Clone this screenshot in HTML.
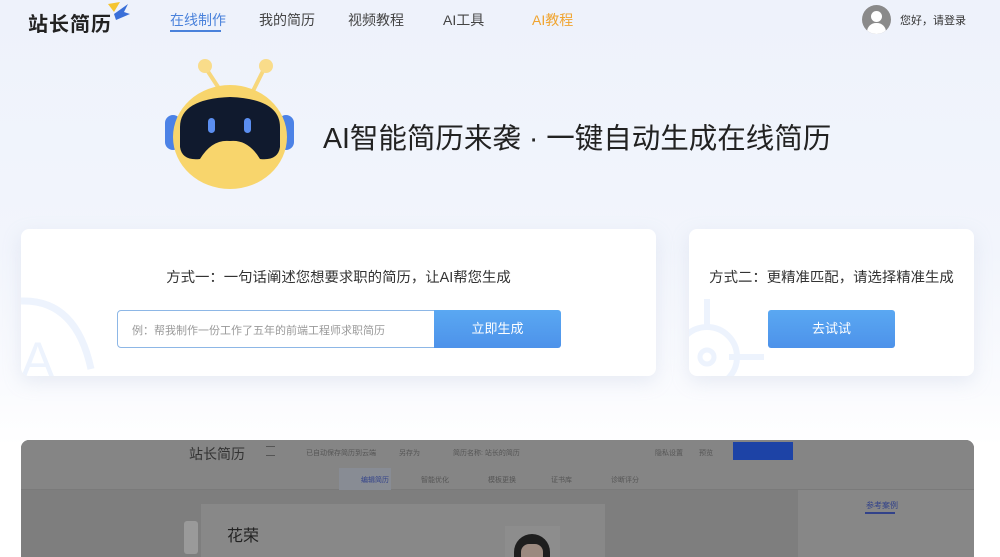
<!DOCTYPE html>
<html><head><meta charset="utf-8"><style>
*{margin:0;padding:0;box-sizing:border-box}
body{width:1000px;height:557px;overflow:hidden;font-family:"Liberation Sans","Noto Sans CJK SC",sans-serif;background:linear-gradient(180deg,#eef2fb 0%,#f2f5fc 45%,#fafbfe 70%,#fff 80%);position:relative;color:#333}
.abs{position:absolute}
.nav a{position:absolute;top:10px;font-size:14px;color:#444;text-decoration:none}
.card{position:absolute;background:#fff;border-radius:8px;box-shadow:0 6px 18px rgba(180,190,215,.25);overflow:hidden}
.btn{position:absolute;background:linear-gradient(180deg,#5aa8f2,#4d92ea);color:#fff;font-size:13px;text-align:center;border-radius:3px}
.s{position:absolute;font-size:7px;color:#555}
</style></head><body>
<div class="abs" style="left:28px;top:8px;font-size:20px;font-weight:bold;color:#222;letter-spacing:1px">站长简历</div>
<svg class="abs" style="left:104px;top:0" width="28" height="22"><polygon points="4,4 16,2 10,12" fill="#f5c531"/><polygon points="10,14 24,4 20,12 26,14 12,20" fill="#3a6fd8"/></svg>
<div class="nav">
<a style="left:170px;color:#4a82db">在线制作</a>
<div class="abs" style="left:170px;top:30px;width:51px;height:2px;background:#4a82db"></div>
<a style="left:259px">我的简历</a>
<a style="left:348px">视频教程</a>
<a style="left:443px">AI工具</a>
<a style="left:532px;color:#f0a42f">AI教程</a>
</div>
<div class="abs" style="left:862px;top:5px;width:29px;height:29px;border-radius:50%;background:#8a8a8a;overflow:hidden"><div class="abs" style="left:9px;top:6px;width:11px;height:11px;border-radius:50%;background:#fff"></div><div class="abs" style="left:5px;top:18px;width:19px;height:14px;border-radius:9px 9px 0 0;background:#fff"></div></div>
<div class="abs" style="left:900px;top:12px;font-size:11px;color:#333">您好，请登录</div>
<!-- robot -->
<svg class="abs" style="left:160px;top:55px" width="140" height="135">
<line x1="45" y1="12" x2="62" y2="38" stroke="#f7d77c" stroke-width="4"/><line x1="105" y1="12" x2="92" y2="38" stroke="#f7d77c" stroke-width="4"/>
<circle cx="45" cy="11" r="7" fill="#f9dc8a"/><circle cx="106" cy="11" r="7" fill="#f9dc8a"/>
<rect x="5" y="60" width="16" height="35" rx="8" fill="#4c82e6"/><rect x="118" y="60" width="16" height="35" rx="8" fill="#4c82e6"/>
<ellipse cx="70" cy="82" rx="57" ry="52" fill="#f8d56c"/>
<path d="M20 72 Q20 44 70 42 Q120 44 120 72 L120 92 Q118 106 100 104 Q88 84 70 86 Q52 84 40 104 Q22 106 20 92Z" fill="#101a2e"/>
<rect x="48" y="63" width="7" height="15" rx="3.5" fill="#5b8ef0"/><rect x="84" y="63" width="7" height="15" rx="3.5" fill="#5b8ef0"/>
</svg>
<div class="abs" style="left:323px;top:116px;font-size:28.5px;color:#222">AI智能简历来袭 · 一键自动生成在线简历</div>
<div class="card" style="left:21px;top:229px;width:635px;height:147px">
<svg class="abs" style="left:0;top:60px" width="80" height="90"><path d="M0 12 Q55 10 70 80" fill="none" stroke="#edf3fd" stroke-width="7"/><text x="0" y="88" font-size="50" fill="#edf3fd" font-family="Liberation Sans">A</text></svg>
<div class="abs" style="left:0;width:635px;top:37px;text-align:center;font-size:14.4px;color:#333">方式一：一句话阐述您想要求职的简历，让AI帮您生成</div>
<div class="abs" style="left:96px;top:81px;width:319px;height:38px;border:1px solid #8db7e6;border-radius:4px 0 0 4px;font-size:11px;color:#999;padding:11px 0 0 14px">例：帮我制作一份工作了五年的前端工程师求职简历</div>
<div class="btn" style="left:413px;top:81px;width:127px;height:38px;line-height:38px;border-radius:0 3px 3px 0">立即生成</div>
</div>
<div class="card" style="left:689px;top:229px;width:285px;height:147px">
<svg class="abs" style="left:0;top:70px" width="80" height="80"><circle cx="18" cy="58" r="30" fill="none" stroke="#edf3fd" stroke-width="6"/><circle cx="18" cy="58" r="7" fill="none" stroke="#edf3fd" stroke-width="5"/><line x1="18" y1="0" x2="18" y2="28" stroke="#edf3fd" stroke-width="6"/><line x1="40" y1="58" x2="75" y2="58" stroke="#edf3fd" stroke-width="6"/></svg>
<div class="abs" style="left:0;width:285px;top:37px;text-align:center;font-size:14.4px;color:#333">方式二：更精准匹配，请选择精准生成</div>
<div class="btn" style="left:79px;top:81px;width:127px;height:38px;line-height:38px">去试试</div>
</div>
<!-- preview -->
<div class="abs" style="left:21px;top:440px;width:953px;height:117px;background:#7e7e7e;border-radius:8px 8px 0 0;overflow:hidden">
<div class="abs" style="left:0;top:0;width:953px;height:50px;background:#858585;border-bottom:1px solid #7a7a7a"></div>
<div class="abs" style="left:168px;top:4px;font-size:14px;color:#333">站长简历</div>
<div class="abs" style="left:245px;top:6px;width:9px;height:10px;border-top:1px solid #555;border-bottom:1px solid #555"></div>
<div class="s" style="left:285px;top:8px">已自动保存简历到云端</div>
<div class="s" style="left:378px;top:8px">另存为</div>
<div class="s" style="left:432px;top:8px">简历名称: 站长的简历</div>
<div class="s" style="left:634px;top:8px">隐私设置</div>
<div class="s" style="left:678px;top:8px">预览</div>
<div class="abs" style="left:712px;top:2px;width:60px;height:18px;background:#1d43a6"></div>
<div class="abs" style="left:318px;top:28px;width:52px;height:22px;background:#888c94"></div>
<div class="s" style="left:340px;top:35px;color:#32428a">编辑简历</div>
<div class="s" style="left:400px;top:35px">智能优化</div>
<div class="s" style="left:467px;top:35px">模板更换</div>
<div class="s" style="left:530px;top:35px">证书库</div>
<div class="s" style="left:590px;top:35px">诊断评分</div>
<div class="abs" style="left:777px;top:50px;width:176px;height:70px;background:#878787"></div>
<div class="abs" style="left:845px;top:60px;font-size:8px;color:#32428a">参考案例</div>
<div class="abs" style="left:844px;top:72px;width:30px;height:2px;background:#32428a"></div>
<div class="abs" style="left:180px;top:64px;width:404px;height:60px;background:#888888"></div>
<div class="abs" style="left:206px;top:82px;font-size:16px;color:#222">花荣</div>
<div class="abs" style="left:163px;top:81px;width:14px;height:33px;border-radius:3px;background:#9a9a9a"></div>
<div class="abs" style="left:484px;top:86px;width:55px;height:40px;background:#8d8d8d"></div>
<div class="abs" style="left:493px;top:94px;width:36px;height:40px;border-radius:18px 18px 0 0;background:#1e1e1e"></div>
<div class="abs" style="left:500px;top:104px;width:22px;height:20px;border-radius:8px;background:#9c8a80"></div>
</div>
</body></html>
